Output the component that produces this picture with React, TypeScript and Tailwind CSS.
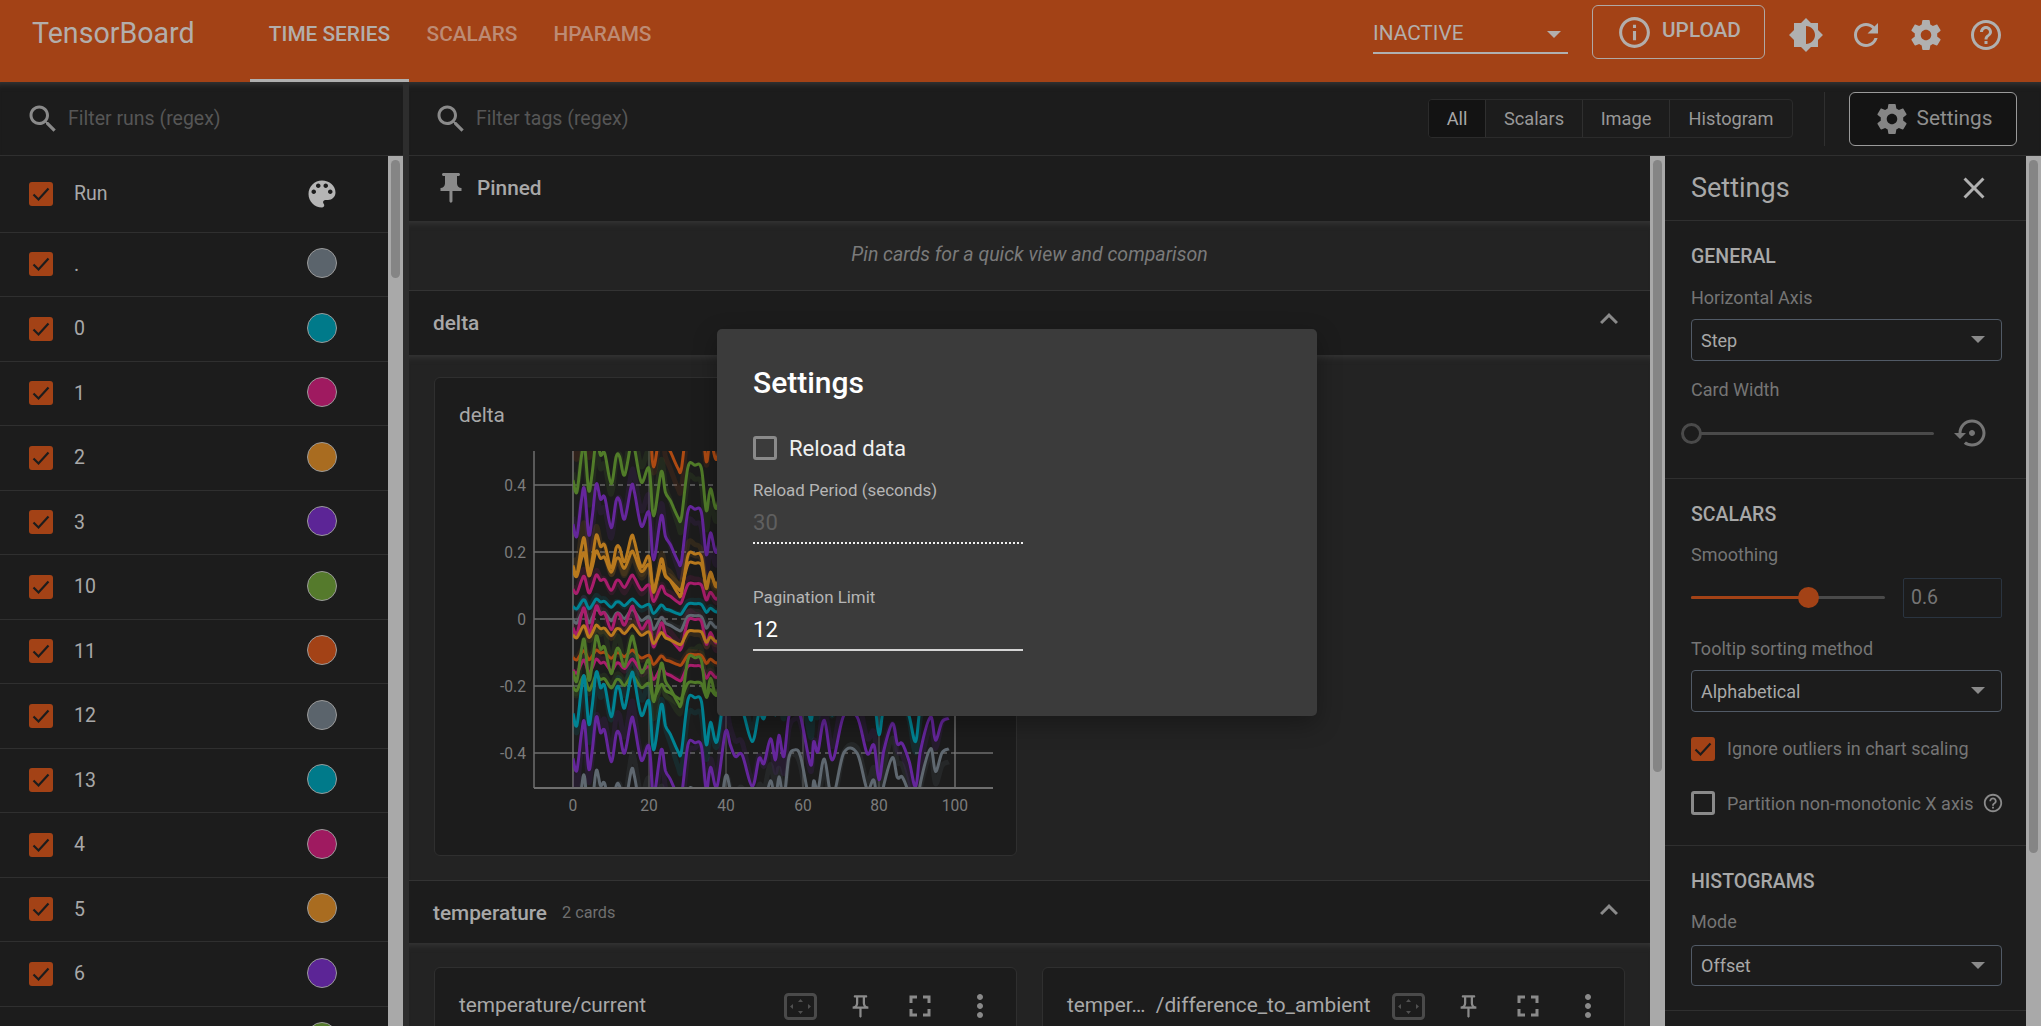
const ICONS = {
  settings:
    "M19.43 12.98c.04-.32.07-.64.07-.98s-.03-.66-.07-.98l2.11-1.65c.19-.15.24-.42.12-.64l-2-3.46c-.12-.22-.39-.3-.61-.22l-2.49 1c-.52-.4-1.08-.73-1.69-.98l-.38-2.65C14.46 2.18 14.25 2 14 2h-4c-.25 0-.46.18-.49.42l-.38 2.65c-.61.25-1.17.59-1.69.98l-2.49-1c-.23-.09-.49 0-.61.22l-2 3.46c-.13.22-.07.49.12.64l2.11 1.65c-.04.32-.07.65-.07.98s.03.66.07.98l-2.11 1.65c-.19.15-.24.42-.12.64l2 3.46c.12.22.39.3.61.22l2.49-1c.52.4 1.08.73 1.69.98l.38 2.65c.03.24.24.42.49.42h4c.25 0 .46-.18.49-.42l.38-2.65c.61-.25 1.17-.59 1.69-.98l2.49 1c.23.09.49 0 .61-.22l2-3.46c.12-.22.07-.49-.12-.64l-2.11-1.65zM12 15.5c-1.93 0-3.5-1.57-3.5-3.5s1.57-3.5 3.5-3.5 3.5 1.57 3.5 3.5-1.57 3.5-3.5 3.5z",
  search:
    "M15.5 14h-.79l-.28-.27C15.41 12.59 16 11.11 16 9.5 16 5.91 13.09 3 9.5 3S3 5.91 3 9.5 5.91 16 9.5 16c1.61 0 3.09-.59 4.23-1.57l.27.28v.79l5 4.99L20.49 19l-4.99-5zm-6 0C7.01 14 5 11.99 5 9.5S7.01 5 9.5 5 14 7.01 14 9.5 11.99 14 9.5 14z",
  brightness:
    "M20 15.31L23.31 12 20 8.69V4h-4.69L12 .69 8.69 4H4v4.69L.69 12 4 15.31V20h4.69L12 23.31 15.31 20H20v-4.69zM12 18V6c3.31 0 6 2.69 6 6s-2.69 6-6 6z",
  refresh:
    "M17.65 6.35C16.2 4.9 14.21 4 12 4c-4.42 0-7.99 3.58-7.99 8s3.57 8 7.99 8c3.73 0 6.84-2.55 7.73-6h-2.08c-.82 2.33-3.04 4-5.65 4-3.31 0-6-2.69-6-6s2.69-6 6-6c1.66 0 3.14.69 4.22 1.78L13 11h7V4l-2.35 2.35z",
  help: "M11 18h2v-2h-2v2zm1-16C6.48 2 2 6.48 2 12s4.48 10 10 10 10-4.48 10-10S17.52 2 12 2zm0 18c-4.41 0-8-3.59-8-8s3.59-8 8-8 8 3.59 8 8-3.59 8-8 8zm0-14c-2.21 0-4 1.79-4 4h2c0-1.1.9-2 2-2s2 .9 2 2c0 2-3 1.75-3 5h2c0-2.25 3-2.5 3-5 0-2.21-1.79-4-4-4z",
  info: "M11 17h2v-6h-2v6zm1-15C6.48 2 2 6.48 2 12s4.48 10 10 10 10-4.48 10-10S17.52 2 12 2zm0 18c-4.41 0-8-3.59-8-8s3.59-8 8-8 8 3.59 8 8-3.59 8-8 8zM11 9h2V7h-2v2z",
  palette:
    "M12 3c-4.97 0-9 4.03-9 9s4.03 9 9 9c.83 0 1.5-.67 1.5-1.5 0-.39-.15-.74-.39-1.01-.23-.26-.38-.61-.38-.99 0-.83.67-1.5 1.5-1.5H16c2.76 0 5-2.24 5-5 0-4.42-4.03-8-9-8zm-5.5 9c-.83 0-1.5-.67-1.5-1.5S5.67 9 6.5 9 8 9.67 8 10.5 7.33 12 6.5 12zm3-4C8.67 8 8 7.33 8 6.5S8.67 5 9.5 5s1.5.67 1.5 1.5S10.33 8 9.5 8zm5 0c-.83 0-1.5-.67-1.5-1.5S13.67 5 14.5 5s1.5.67 1.5 1.5S15.33 8 14.5 8zm3 4c-.83 0-1.5-.67-1.5-1.5S16.67 9 17.5 9s1.5.67 1.5 1.5-.67 1.5-1.5 1.5z",
  pin: "M16 9V4h1c.55 0 1-.45 1-1s-.45-1-1-1H7c-.55 0-1 .45-1 1s.45 1 1 1h1v5c0 1.66-1.34 3-3 3v2h5.97v7l1 1 1-1v-7H19v-2c-1.66 0-3-1.34-3-3z",
  pinOutline:
    "M14 4v5c0 1.12.37 2.16 1 3H9c.65-.86 1-1.9 1-3V4h4m3-2H7c-.55 0-1 .45-1 1s.45 1 1 1h1v5c0 1.66-1.34 3-3 3v2h5.97v7l1 1 1-1v-7H19v-2c-1.66 0-3-1.34-3-3V4h1c.55 0 1-.45 1-1s-.45-1-1-1z",
  close:
    "M19 6.41L17.59 5 12 10.59 6.41 5 5 6.41 10.59 12 5 17.59 6.41 19 12 13.41 17.59 19 19 17.59 13.41 12z",
  expandLess: "M12 8l-6 6 1.41 1.41L12 10.83l4.59 4.58L18 14z",
  fullscreen: "M7 14H5v5h5v-2H7v-3zm-2-4h2V7h3V5H5v5zm12 7h-3v2h5v-5h-2v3zM14 5v2h3v3h2V5h-5z",
  more: "M12 8c1.1 0 2-.9 2-2s-.9-2-2-2-2 .9-2 2 .9 2 2 2zm0 2c-1.1 0-2 .9-2 2s.9 2 2 2 2-.9 2-2-.9-2-2-2zm0 6c-1.1 0-2 .9-2 2s.9 2 2 2 2-.9 2-2-.9-2-2-2z",
  restore:
    "M14 12c0-1.1-.9-2-2-2s-2 .9-2 2 .9 2 2 2 2-.9 2-2zm-2-9c-4.97 0-9 4.03-9 9H0l4 4 4-4H5c0-3.87 3.13-7 7-7s7 3.13 7 7-3.13 7-7 7c-1.51 0-2.91-.49-4.06-1.3l-1.42 1.44C8.04 20.3 9.94 21 12 21c4.97 0 9-4.03 9-9s-4.03-9-9-9z",
};

function Icon({ name, className }: { name: keyof typeof ICONS; className: string }) {
  return (
    <svg viewBox="0 0 24 24" className={className} fill="currentColor">
      <path d={ICONS[name]} />
    </svg>
  );
}

function Checkbox({ checked }: { checked: boolean }) {
  if (!checked) {
    return <span className="block h-[24px] w-[24px] shrink-0 rounded-[3px] border-[3px] border-[#8a8a8a]" />;
  }
  return (
    <span className="flex h-[24px] w-[24px] shrink-0 items-center justify-center rounded-[3px] bg-[#a34216]">
      <svg viewBox="0 0 24 24" className="h-[24px] w-[24px]" fill="none" stroke="#1c1c1c" strokeWidth="2.2">
        <path d="M4.5 12.5l5 5 10-11" />
      </svg>
    </span>
  );
}

const RUNS = [
  { id: "dot", name: ".", color: "bg-[#5b646c]" },
  { id: "0", name: "0", color: "bg-[#007a8a]" },
  { id: "1", name: "1", color: "bg-[#9f1a60]" },
  { id: "2", name: "2", color: "bg-[#a96c20]" },
  { id: "3", name: "3", color: "bg-[#5c2596]" },
  { id: "10", name: "10", color: "bg-[#557a2c]" },
  { id: "11", name: "11", color: "bg-[#a34216]" },
  { id: "12", name: "12", color: "bg-[#5b646c]" },
  { id: "13", name: "13", color: "bg-[#007a8a]" },
  { id: "4", name: "4", color: "bg-[#9f1a60]" },
  { id: "5", name: "5", color: "bg-[#a96c20]" },
  { id: "6", name: "6", color: "bg-[#5c2596]" },
  { id: "7", name: "", color: "bg-[#557a2c]" },
];

function Sidebar() {
  return (
    <aside className="flex h-full w-[403px] shrink-0 flex-col overflow-hidden">
      <div className="flex h-[74px] shrink-0 items-center gap-[7px] border-b border-[#2f2f2f] pl-[25px] shadow-[inset_0_8px_6px_-6px_#383838]">
        <Icon name="search" className="h-[36px] w-[36px] text-[#8a8a8a]" />
        <span className="text-[19.5px] text-[#565656]">Filter runs (regex)</span>
      </div>
      <div className="flex min-h-0 flex-1">
        <div className="min-w-0 flex-1 overflow-hidden">
          <div className="flex h-[76.5px] items-center border-b border-[#2f2f2f] pl-[29px] pr-[48px]">
            <Checkbox checked />
            <span className="ml-[21px] flex-1 text-[19.5px] text-[#a8a8a8]">Run</span>
            <Icon name="palette" className="h-[36px] w-[36px] text-[#b5b5b5]" />
          </div>
          {RUNS.map((run) => (
            <div key={run.id} className="flex h-[64.5px] items-center border-b border-[#2f2f2f] pl-[29px] pr-[51px]">
              <Checkbox checked />
              <span className="ml-[21px] flex-1 text-[19.5px] text-[#a8a8a8]">{run.name}</span>
              <span className={`mb-[2px] block h-[30px] w-[30px] rounded-full border border-[#9a9a9a] ${run.color}`} />
            </div>
          ))}
        </div>
        <Scrollbar thumb="h-[118px]" />
      </div>
    </aside>
  );
}

function Scrollbar({ thumb }: { thumb: string }) {
  return (
    <div className="h-full w-[15px] shrink-0 bg-[#a9a9a9] pt-[4px]">
      <div className={`mx-auto w-[9px] rounded-full bg-[#858585] ${thumb}`} />
    </div>
  );
}

// shared wave traced from the plot: [step, value]
const WAVE: [number, number][] = [
  [0, -0.09], [1, -0.41], [2.2, 0.55], [3, 0.86], [4.1, -0.36], [5, 0.09], [6.1, 1], [7.2, 0.59], [8.3, 0.64],
  [10, -0.18], [11.3, 0.55], [12.2, 0.55], [13.5, 0.05], [15.3, 0.95], [16.1, 0.77], [17.9, -0.14], [19.9, 0.23],
  [21.1, -1.05], [23.1, 0.14], [24.2, -0.41], [25.5, -0.64], [27.5, -1.09], [28.4, -1.09], [30.1, 0.27], [31.9, 0.32],
  [33.6, 0.23], [34.9, -0.91], [36, -0.32], [37.7, -0.83], [39.9, 0.61], [41.2, 0.26], [42.5, -0.04], [44.3, 0],
  [46.9, -0.83], [48.7, -0.09], [50, -0.22], [51.7, 0.43], [53, -0.13], [53.9, 0.52], [55.2, -0.04], [56.5, 1],
  [58, 1.2], [59.6, 1], [62.2, -0.26], [63, 0.35], [64.1, 0.09], [65.8, 0.91], [67.9, -0.13], [70.9, 1.04],
  [74.4, 1], [77, 0.04], [78.8, 0.26], [80.1, -0.65], [81.4, 0.13], [83.6, 0.83], [84.9, 0.3], [86.2, 0.3],
  [88, -0.17], [89.7, -0.83], [91, 0.13], [93.6, 1], [94.9, 0.39], [96.6, 0.87], [98.4, 0.96],
];

const PURPLE = "#65269c";
const ORANGE = "#b97a1e";
const MAGENTA = "#a91d6c";
const TEAL = "#008494";
const GREEN = "#517c29";
const RUST = "#ad4a12";
const GREY = "#5f6870";

// center, amplitude, colour, drift of the center per step
const SERIES: [number, number, string, number][] = [
  [428, 37, RUST, 0],
  [477, 37, GREEN, 0],
  [521, 37, PURPLE, 0],
  [619, 10, GREY, 0],
  [606, 7, TEAL, 0],
  [588, 13, MAGENTA, 0],
  [626, 20, MAGENTA, 0],
  [669, 10, MAGENTA, 0],
  [657, 7, RUST, 0],
  [634, 9, ORANGE, 0],
  [569, 18, ORANGE, 0],
  [563, 28, ORANGE, 0],
  [686, 11, GREEN, 0],
  [668, 32, GREEN, 0],
  [810, 38, GREY, -0.25],
  [755, 38, PURPLE, 0],
  [710, 38, TEAL, 0],
];

function wavePath(center: number, amp: number, drift: number, jitter: number) {
  const pts = WAVE.map(([step, value], i) => ({
    x: 572 + step * 3.82,
    y: center + drift * step - amp * value + Math.sin(i * 12.9 + center) * amp * jitter,
  }));
  let d = `M${pts[0].x.toFixed(1)} ${pts[0].y.toFixed(1)}`;
  for (let i = 0; i < pts.length - 1; i++) {
    const p0 = pts[Math.max(i - 1, 0)];
    const p1 = pts[i];
    const p2 = pts[i + 1];
    const p3 = pts[Math.min(i + 2, pts.length - 1)];
    const c1x = p1.x + (p2.x - p0.x) / 6;
    const c1y = p1.y + (p2.y - p0.y) / 6;
    const c2x = p2.x - (p3.x - p1.x) / 6;
    const c2y = p2.y - (p3.y - p1.y) / 6;
    d += `C${c1x.toFixed(1)} ${c1y.toFixed(1)} ${c2x.toFixed(1)} ${c2y.toFixed(1)} ${p2.x.toFixed(1)} ${p2.y.toFixed(1)}`;
  }
  return d;
}

function DeltaChart() {
  const yTicks: [string, number][] = [["0.4", 485], ["0.2", 552], ["0", 619], ["-0.2", 686], ["-0.4", 753]];
  const xTicks: [string, number][] = [["0", 572], ["20", 648], ["40", 725], ["60", 802], ["80", 878], ["100", 954]];
  return (
    <svg viewBox="434 436 582 400" className="block h-[400px] w-[582px]">
      <defs>
        <clipPath id="plot">
          <rect x="572" y="451" width="382" height="337" />
        </clipPath>
      </defs>
      {xTicks.map(([label, x]) => (
        <g key={label}>
          <line x1={x} x2={x} y1="451" y2="788" stroke={x === 572 || x === 954 ? "#6e6e6e" : "#4a4a4a"} strokeWidth="1.5" />
          <text x={x} y="811" textAnchor="middle" fontSize="15.6" fill="#7c7c7c">
            {label}
          </text>
        </g>
      ))}
      {yTicks.map(([label, y]) => (
        <g key={label}>
          <line x1="533" x2="572" y1={y} y2={y} stroke="#6e6e6e" strokeWidth="1.5" />
          <line x1="572" x2="954" y1={y} y2={y} stroke="#8a8a8a" strokeWidth="1" strokeDasharray="5 4" />
          <line x1="954" x2="992" y1={y} y2={y} stroke="#6e6e6e" strokeWidth="1.5" />
          <text x="525" y={y + 5.5} textAnchor="end" fontSize="15.6" fill="#7c7c7c">
            {label}
          </text>
        </g>
      ))}
      <g clipPath="url(#plot)" fill="none" strokeLinejoin="round">
        {SERIES.map(([center, amp, color, drift]) => (
          <path key={`raw${center}`} d={wavePath(center, amp * 1.1, drift, 0.4)} stroke={color} strokeWidth="5" opacity="0.14" />
        ))}
        {SERIES.map(([center, amp, color, drift]) => (
          <path key={center} d={wavePath(center, amp, drift, 0)} stroke={color} strokeWidth="3" />
        ))}
      </g>
      <line x1="533" x2="533" y1="451" y2="788" stroke="#6e6e6e" strokeWidth="1.5" />
      <line x1="533" x2="992" y1="788" y2="788" stroke="#6e6e6e" strokeWidth="2" />
    </svg>
  );
}

function FitIcon() {
  return (
    <svg viewBox="0 0 33 27" className="h-[27px] w-[33px]">
      <rect x="1.5" y="1.5" width="30" height="24" rx="3" fill="none" stroke="#4a4a4a" strokeWidth="3" />
      <path d="M16.5 6l-2.5 3h5zM16.5 21l-2.5-3h5zM6 13.5l3-2.5v5zM27 13.5l-3-2.5v5z" fill="#505050" />
    </svg>
  );
}

function CardTool({ children }: { children: React.ReactNode }) {
  return <div className="flex w-[60px] shrink-0 justify-center">{children}</div>;
}

function TemperatureCard({ title }: { title: string }) {
  return (
    <div className="h-[200px] w-[583px] rounded-[6px] border border-[#2f2f2f] bg-[#1c1c1c] pl-[24px] pr-[6px] pt-[24px]">
      <div className="flex h-[28px] items-center">
        <span className="min-w-0 flex-1 whitespace-nowrap text-[20.8px] text-[#a8a8a8]">{title}</span>
        <CardTool>
          <FitIcon />
        </CardTool>
        <CardTool>
          <Icon name="pinOutline" className="h-[27px] w-[27px] text-[#8a8a8a]" />
        </CardTool>
        <CardTool>
          <Icon name="fullscreen" className="h-[36px] w-[36px] text-[#8a8a8a]" />
        </CardTool>
        <CardTool>
          <Icon name="more" className="h-[36px] w-[36px] text-[#8a8a8a]" />
        </CardTool>
      </div>
    </div>
  );
}

function SectionHeader({
  title,
  count,
  className,
  chevron,
}: {
  title: string;
  count?: string;
  className: string;
  chevron: string;
}) {
  return (
    <div className={`flex shrink-0 items-center pl-[24px] pr-[23px] ${className}`}>
      <span className="text-[20.8px] font-medium text-[#a8a8a8]">{title}</span>
      {count ? <span className="ml-[15px] text-[16.25px] text-[#6f6f6f]">{count}</span> : null}
      <Icon name="expandLess" className={`ml-auto h-[36px] w-[36px] text-[#8a8a8a] ${chevron}`} />
    </div>
  );
}

function MainColumn() {
  return (
    <div className="flex h-full min-w-0 flex-1">
      <div className="min-w-0 flex-1 overflow-hidden">
        <div className="flex h-[65px] items-center border-b border-[#1c1c1c] pl-[24px] shadow-[0_1px_0_#2b2b2b]">
          <Icon name="pin" className="h-[36px] w-[36px] text-[#8a8a8a]" />
          <span className="ml-[8px] pt-[1px] text-[20.8px] font-medium text-[#a8a8a8]">Pinned</span>
        </div>
        <div className="flex h-[70px] items-center justify-center border-b border-[#333333] bg-[#232323] pb-[1px] text-[19.5px] italic text-[#7a7a7a] shadow-[inset_0_8px_6px_-6px_#383838]">
          Pin cards for a quick view and comparison
        </div>
        <SectionHeader title="delta" className="h-[64px] pt-[2px]" chevron="mb-[10px]" />
        <div className="h-[526px] border-b border-[#333333] bg-[#232323] pl-[25px] pt-[22px] shadow-[inset_0_8px_6px_-6px_#383838]">
          <div className="h-[479px] w-[583px] rounded-[6px] border border-[#2f2f2f] bg-[#1c1c1c] pt-[26px]">
            <div className="pl-[24px] text-[20.8px] leading-[22px] text-[#a8a8a8]">delta</div>
            <div className="mt-[10px]">
              <DeltaChart />
            </div>
          </div>
        </div>
        <SectionHeader title="temperature" count="2 cards" className="h-[62px] pt-[3px]" chevron="mb-[7px]" />
        <div className="flex h-[200px] gap-[25px] bg-[#232323] pl-[25px] pt-[24px] shadow-[inset_0_8px_6px_-6px_#383838]">
          <TemperatureCard title="temperature/current" />
          <TemperatureCard title={"temper…\u00a0\u00a0/difference_to_ambient"} />
        </div>
      </div>
      <Scrollbar thumb="h-[612px]" />
    </div>
  );
}

function SelectBox({ value, className }: { value: string; className: string }) {
  return (
    <div className={`flex h-[41.5px] w-[311px] items-center rounded-[4px] border border-[#515a66] pl-[9px] pr-[16px] ${className}`}>
      <span className="flex-1 pt-[1px] text-[18px] text-[#a8a8a8]">{value}</span>
      <span className="h-0 w-0 border-x-[7px] border-t-[7px] border-x-transparent border-t-[#8a8a8a]" />
    </div>
  );
}

function SettingsPanel() {
  const heading = "text-[19.5px] font-medium leading-[22px] text-[#a8a8a8]";
  const label = "pt-[1px] text-[18px] leading-[20px] text-[#757575]";
  return (
    <div className="flex h-full w-[376px] shrink-0">
      <div className="w-[361px] overflow-hidden">
        <div className="flex h-[65px] items-center justify-between border-b border-[#2f2f2f] pl-[26px] pr-[34px]">
          <span className="text-[27px] text-[#a8a8a8]">Settings</span>
          <Icon name="close" className="h-[36px] w-[36px] text-[#b0b0b0]" />
        </div>
        <div className="h-[258px] border-b border-[#2f2f2f] pl-[26px] pt-[25px]">
          <div className={heading}>GENERAL</div>
          <div className={`mt-[19px] ${label}`}>Horizontal Axis</div>
          <SelectBox value="Step" className="mt-[11px]" />
          <div className={`mt-[18.5px] ${label}`}>Card Width</div>
          <div className="mt-[17px] flex h-[32px] items-center">
            <div className="relative h-[3px] w-[243px] rounded-full bg-[#4a4a4a]">
              <span className="absolute -left-[10px] -top-[9px] h-[21px] w-[21px] rounded-full border-[3px] border-[#4a4a4a] bg-[#1c1c1c]" />
            </div>
            <Icon name="restore" className="ml-[20px] h-[36px] w-[36px] text-[#757575]" />
          </div>
        </div>
        <div className="h-[367px] border-b border-[#2f2f2f] pl-[26px] pt-[25px]">
          <div className={heading}>SCALARS</div>
          <div className={`mt-[18px] ${label}`}>Smoothing</div>
          <div className="mt-[12.5px] flex h-[40.5px] items-center">
            <div className="relative h-[3px] w-[194px] rounded-full bg-[#4a4a4a]">
              <div className="h-[3px] w-[117px] rounded-full bg-[#a34216]" />
              <span className="absolute left-[107px] -top-[9px] h-[21px] w-[21px] rounded-full bg-[#a34216]" />
            </div>
            <div className="ml-[18px] flex h-[40.5px] w-[99px] items-center rounded-[2px] border border-[#2a3440] pl-[7px] text-[19.5px] text-[#757575]">
              0.6
            </div>
          </div>
          <div className={`mt-[19.5px] ${label}`}>Tooltip sorting method</div>
          <SelectBox value="Alphabetical" className="mt-[11.5px]" />
          <div className="mt-[25px] flex h-[24px] items-center gap-[12px]">
            <Checkbox checked />
            <span className="text-[18px] text-[#757575]">Ignore outliers in chart scaling</span>
          </div>
          <div className="mt-[30.5px] flex h-[24px] items-center">
            <Checkbox checked={false} />
            <span className="ml-[12px] text-[18px] text-[#757575]">Partition non-monotonic X axis</span>
            <Icon name="help" className="ml-[8px] h-[22px] w-[22px] text-[#8a8a8a]" />
          </div>
        </div>
        <div className="h-[165px] border-b border-[#2f2f2f] pl-[26px] pt-[25px]">
          <div className={heading}>HISTOGRAMS</div>
          <div className={`mt-[18px] ${label}`}>Mode</div>
          <SelectBox value="Offset" className="mt-[12.5px]" />
        </div>
      </div>
      <Scrollbar thumb="h-[693px]" />
    </div>
  );
}

function Toolbar() {
  const filters = [
    { name: "All", width: "w-[57px]", active: true },
    { name: "Scalars", width: "w-[97px]", active: false },
    { name: "Image", width: "w-[87px]", active: false },
    { name: "Histogram", width: "w-[122px]", active: false },
  ];
  return (
    <div className="flex h-[74px] shrink-0 items-center border-b border-[#2f2f2f] pl-[24px] pr-[24px] shadow-[inset_0_8px_6px_-6px_#383838]">
      <Icon name="search" className="h-[36px] w-[36px] text-[#8a8a8a]" />
      <span className="ml-[7px] text-[19.5px] text-[#565656]">Filter tags (regex)</span>
      <div className="ml-auto flex h-[39px] overflow-hidden rounded-[4px] border border-[#2b2b2b]">
        {filters.map((filter) => (
          <div
            key={filter.name}
            className={`flex items-center justify-center border-r border-[#2f2f2f] text-[18.2px] last:border-r-0 ${filter.width} ${
              filter.active ? "bg-[#131313] text-[#a8a8a8]" : "text-[#989898]"
            }`}
          >
            {filter.name}
          </div>
        ))}
      </div>
      <div className="ml-[31px] h-[54px] w-px bg-[#2f2f2f]" />
      <div className="ml-[24px] flex h-[54px] w-[168px] items-center justify-center gap-[7px] rounded-[6px] border border-[#9a9a9a] bg-[#141414]">
        <Icon name="settings" className="h-[36px] w-[36px] text-[#858585]" />
        <span className="text-[20.8px] text-[#8f8f8f]">Settings</span>
      </div>
    </div>
  );
}

function Header() {
  return (
    <header className="flex h-[82px] shrink-0 items-start bg-[#a34216]">
      <div className="flex h-[67px] w-[250px] items-center pl-[32px] text-[28.6px] text-[#b3aeab]">TensorBoard</div>
      <nav className="flex h-[82px] text-[20.8px] font-medium">
        <div className="flex w-[159px] justify-center border-b-[3px] border-[#b0b0b0] pt-[19px] text-[#b3aeab]">TIME SERIES</div>
        <div className="flex w-[126px] justify-center pt-[19px] text-[#bd8b74]">SCALARS</div>
        <div className="flex w-[135px] justify-center pt-[19px] text-[#bd8b74]">HPARAMS</div>
      </nav>
      <div className="ml-auto mt-[20px] flex h-[34px] w-[195px] items-center justify-between border-b-2 border-[#b0b0b0] pb-[4px] pr-[7px] text-[20.8px] text-[#b3aeab]">
        INACTIVE
        <span className="h-0 w-0 border-x-[7px] border-t-[7px] border-x-transparent border-t-[#b3aeab]" />
      </div>
      <div className="ml-[24px] mt-[5px] flex h-[54px] w-[173px] items-center rounded-[6px] border border-[#b0a8a4] pl-[23px] text-[20.8px] font-medium text-[#b3aeab]">
        <Icon name="info" className="h-[37px] w-[37px]" />
        <span className="mb-[2px] ml-[9px]">UPLOAD</span>
      </div>
      <div className="ml-[23px] mr-[37px] mt-[17px] flex gap-[24px] text-[#b0b0b0]">
        <Icon name="brightness" className="h-[36px] w-[36px]" />
        <Icon name="refresh" className="h-[36px] w-[36px]" />
        <Icon name="settings" className="h-[36px] w-[36px]" />
        <Icon name="help" className="h-[36px] w-[36px]" />
      </div>
    </header>
  );
}

function ReloadDialog() {
  return (
    <div className="absolute left-[717px] top-[329px] h-[387px] w-[600px] rounded-[5px] bg-[#3b3b3b] pl-[36px] pt-[38px] shadow-[0_8px_24px_rgba(0,0,0,0.3)]">
      <div className="text-[30px] font-medium leading-[32px] text-white">Settings</div>
      <div className="mt-[37px] flex h-[24px] items-center gap-[12px] text-[22.1px] text-[#f0f0f0]">
        <Checkbox checked={false} />
        <span className="pt-[1px]">Reload data</span>
      </div>
      <div className="mt-[20px] text-[16.9px] leading-[20px] text-[#b5b5b5]">Reload Period (seconds)</div>
      <div className="mt-[10px] h-[34px] w-[270px] border-b-2 border-dotted border-[#f0f0f0] text-[22.1px] leading-[24px] text-[#5f5f5f]">30</div>
      <div className="mt-[43px] text-[16.9px] leading-[20px] text-[#b5b5b5]">Pagination Limit</div>
      <div className="mt-[10px] h-[34px] w-[270px] border-b-2 border-[#d5d5d5] text-[22.1px] leading-[24px] text-white">12</div>
    </div>
  );
}

export default function App() {
  return (
    <div className="relative flex h-[1026px] w-[2041px] flex-col overflow-hidden bg-[#1c1c1c] font-['Roboto',sans-serif]">
      <Header />
      <div className="flex min-h-0 flex-1">
        <Sidebar />
        <div className="h-full w-[6px] shrink-0 bg-[#2d2d2d]" />
        <div className="flex min-w-0 flex-1 flex-col">
          <Toolbar />
          <div className="flex min-h-0 flex-1">
            <MainColumn />
            <SettingsPanel />
          </div>
        </div>
      </div>
      <ReloadDialog />
    </div>
  );
}
